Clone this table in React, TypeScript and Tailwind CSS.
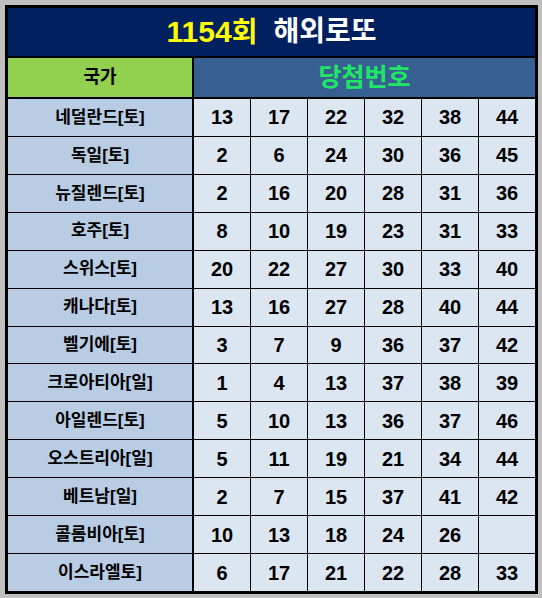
const ROWS: { name: string; nums: (number | null)[] }[] = [
  { name: '네덜란드[토]', nums: [13, 17, 22, 32, 38, 44] },
  { name: '독일[토]', nums: [2, 6, 24, 30, 36, 45] },
  { name: '뉴질렌드[토]', nums: [2, 16, 20, 28, 31, 36] },
  { name: '호주[토]', nums: [8, 10, 19, 23, 31, 33] },
  { name: '스위스[토]', nums: [20, 22, 27, 30, 33, 40] },
  { name: '캐나다[토]', nums: [13, 16, 27, 28, 40, 44] },
  { name: '벨기에[토]', nums: [3, 7, 9, 36, 37, 42] },
  { name: '크로아티아[일]', nums: [1, 4, 13, 37, 38, 39] },
  { name: '아일렌드[토]', nums: [5, 10, 13, 36, 37, 46] },
  { name: '오스트리아[일]', nums: [5, 11, 19, 21, 34, 44] },
  { name: '베트남[일]', nums: [2, 7, 15, 37, 41, 42] },
  { name: '콜롬비아[토]', nums: [10, 13, 18, 24, 26, null] },
  { name: '이스라엘토]', nums: [6, 17, 21, 22, 28, 33] },
]

export default function App() {
  return (
    <div
      className="w-[542px] h-[598px] bg-[#c0c0c0] pt-[5px] pl-[5px]"
      style={{ fontFamily: '"Liberation Sans", "Noto Sans CJK KR", sans-serif' }}
    >
      <div className="w-[533px] h-[589px] border-[3px] border-black bg-black flex flex-col">
        {/* title */}
        <div className="h-[48px] bg-[#002060] flex items-center justify-center font-bold">
          <span className="text-[30px] text-[#ffff00] leading-none">
            1154<span className="text-[28px]">회</span>
          </span>
          <span className="text-[28px] text-white leading-none ml-[16px]">해외로또</span>
        </div>

        {/* header */}
        <div className="mt-[2px] h-[39px] grid grid-cols-[184px_1fr] gap-[2px] font-bold">
          <div className="bg-[#92d050] flex items-center justify-center text-[18px] text-black">
            국가
          </div>
          <div className="bg-[#366092] flex items-center justify-center text-[25px] text-[#1fe664]">
            당첨번호
          </div>
        </div>

        {/* body */}
        <div className="mt-[2px] flex-1 grid grid-cols-[185px_repeat(6,56px)] grid-rows-[repeat(13,minmax(0,1fr))] gap-px font-bold">
          {ROWS.map((r) => (
            <Row key={r.name} name={r.name} nums={r.nums} />
          ))}
        </div>
      </div>
    </div>
  )
}

function Row({ name, nums }: { name: string; nums: (number | null)[] }) {
  return (
    <>
      <div className="mr-px bg-[#b8cce4] flex items-center justify-center text-[17px] text-black">
        {name}
      </div>
      {nums.map((n, i) => (
        <div
          key={i}
          className="bg-[#dce6f1] flex items-center justify-center text-[20px] text-black"
        >
          {n ?? ''}
        </div>
      ))}
    </>
  )
}
